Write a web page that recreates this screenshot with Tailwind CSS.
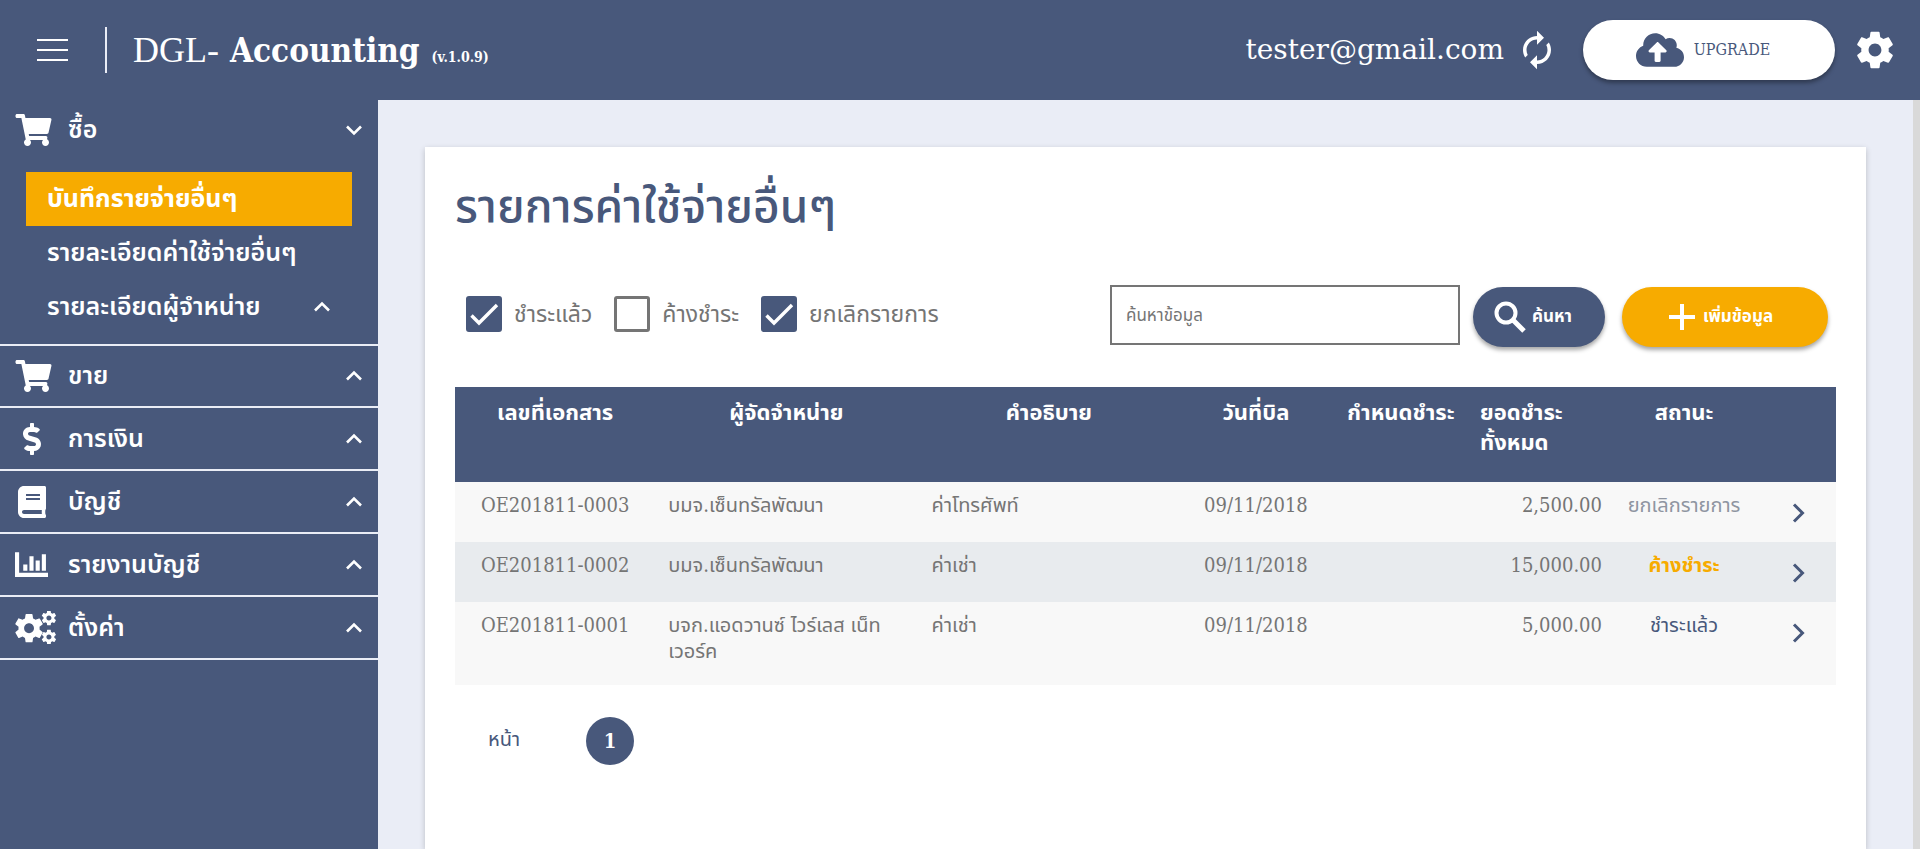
<!DOCTYPE html>
<html lang="th">
<head>
<meta charset="utf-8">
<meta name="viewport" content="width=device-width, initial-scale=1">
<title>DGL- Accounting</title>
<script src="https://cdn.jsdelivr.net/npm/@tailwindcss/browser@4"></script>
</head>
<body class="flex h-screen flex-col overflow-hidden bg-[#eaedf6] font-['DejaVu_Serif_Condensed','Noto_Sans_Thai','Noto_Sans',sans-serif] text-[20px] text-[#757575]">
<svg class="hidden" aria-hidden="true">
  <symbol id="cart" viewBox="0 0 576 512"><path d="M528.12 301.319l47.273-208C578.806 78.301 567.391 64 551.99 64H159.208l-9.166-44.81C147.758 8.021 137.93 0 126.529 0H24C10.745 0 0 10.745 0 24v16c0 13.255 10.745 24 24 24h69.883l70.248 343.435C147.325 417.1 136 435.222 136 456c0 30.928 25.072 56 56 56s56-25.072 56-56c0-15.674-6.447-29.835-16.824-40h209.647C430.447 426.165 424 440.326 424 456c0 30.928 25.072 56 56 56s56-25.072 56-56c0-22.172-12.888-41.332-31.579-50.405l5.517-24.276c3.413-15.018-8.002-29.319-23.403-29.319H218.117l-6.545-32h293.145c11.206 0 20.92-7.754 23.403-18.681z"/></symbol>
  <symbol id="dollar" viewBox="0 0 288 512"><path d="M209.2 233.4l-108-31.6C88.7 198.2 80 186.5 80 173.5c0-16.3 13.200-29.5 29.500-29.5h66.300c12.200 0 24.200 3.700 34.200 10.500 6.100 4.100 14.300 3.100 19.500-2l34.800-34c7.100-6.900 6.100-18.400-1.800-24.500C238 74.800 207.400 64.100 176 64V16c0-8.800-7.200-16-16-16h-32c-8.800 0-16 7.200-16 16v48h-2.500C45.800 64-5.400 118.700.5 183.600c4.200 46.100 39.400 83.600 83.800 96.600l102.500 30c12.500 3.700 21.200 15.300 21.200 28.300 0 16.300-13.200 29.500-29.500 29.500h-66.300C100 368 88 364.300 78 357.500c-6.100-4.100-14.300-3.100-19.500 2l-34.800 34c-7.100 6.900-6.100 18.400 1.800 24.500 24.500 19.200 55.100 29.900 86.500 30v48c0 8.800 7.200 16 16 16h32c8.800 0 16-7.200 16-16v-48.200c46.600-.9 90.300-28.600 105.700-72.700 21.500-61.600-14.600-124.800-72.500-141.700z"/></symbol>
  <symbol id="book" viewBox="0 0 448 512"><path fill-rule="evenodd" d="M448 360V24c0-13.300-10.700-24-24-24H96C43 0 0 43 0 96v320c0 53 43 96 96 96h328c13.300 0 24-10.700 24-24v-16c0-7.500-3.500-14.300-8.900-18.700-4.200-15.400-4.200-59.300 0-74.700 5.400-4.300 8.900-11.100 8.900-18.600zM134 128h212c3.300 0 6 2.700 6 6v20c0 3.300-2.700 6-6 6H134c-3.300 0-6-2.700-6-6v-20c0-3.300 2.700-6 6-6zm0 64h212c3.300 0 6 2.700 6 6v20c0 3.300-2.700 6-6 6H134c-3.300 0-6-2.700-6-6v-20c0-3.300 2.700-6 6-6zM381.400 448H96c-17.700 0-32-14.300-32-32 0-17.600 14.400-32 32-32h285.400c-1.900 17.100-1.900 46.900 0 64z"/></symbol>
  <symbol id="chart" viewBox="0 0 512 512"><path d="M64 64v320h448v64H0V64zM128 256h64v96h-64zM224 128h64v224h-64zM320 192h64v160h-64zM416 96h64v256h-64z"/></symbol>
  <symbol id="gear" viewBox="0 0 24 24"><path d="M19.430 12.980c.04-.32.07-.64.07-.98s-.03-.66-.07-.98l2.110-1.650c.19-.15.24-.42.12-.64l-2-3.460c-.12-.22-.39-.3-.61-.22l-2.490 1c-.52-.4-1.080-.73-1.690-.98l-.38-2.650C14.460 2.180 14.250 2 14 2h-4c-.25 0-.46.18-.49.42l-.38 2.650c-.61.25-1.170.59-1.690.98l-2.490-1c-.23-.09-.49 0-.61.22l-2 3.460c-.13.22-.07.49.12.64l2.110 1.650c-.04.32-.07.65-.07.98s.03.66.07.98l-2.110 1.650c-.19.15-.24.42-.12.64l2 3.460c.12.22.39.3.61.22l2.490-1c.52.4 1.080.73 1.690.98l.38 2.650c.03.24.24.42.49.42h4c.25 0 .46-.18.49-.42l.38-2.650c.61-.25 1.170-.59 1.690-.98l2.490 1c.23.09.49 0 .61-.22l2-3.460c.12-.22.07-.49-.12-.64l-2.110-1.650zM12 15.500c-1.930 0-3.500-1.570-3.500-3.500s1.570-3.500 3.500-3.500 3.500 1.570 3.500 3.500-1.570 3.500-3.500 3.500z"/></symbol>
  <symbol id="cogs" viewBox="0 0 40 32"><use href="#gear" x="-2.800" y="0.200" width="33" height="33"/><use href="#gear" x="24.600" y="-1.800" width="17" height="17"/><use href="#gear" x="24.600" y="16.800" width="17" height="17"/></symbol>
  <symbol id="up" viewBox="0 0 18 12"><path d="M2 9.500 9 2.500l7 7" fill="none" stroke="currentColor" stroke-width="2.600"/></symbol>
  <symbol id="next" viewBox="0 0 14 20"><path d="M2 1.500 10.500 10 2 18.500" fill="none" stroke="currentColor" stroke-width="3"/></symbol>
  <symbol id="tick" viewBox="0 0 36 36"><path d="M5.500 19.500 13 27 31 9" fill="none" stroke="currentColor" stroke-width="3.400"/></symbol>
</svg>

<header class="flex h-[100px] shrink-0 items-center bg-[#48587b] pr-[23px] pl-[37px] text-white">
  <button type="button" aria-label="เมนู" class="flex w-[31px] flex-col gap-[8px]">
    <span class="h-[2px] w-full bg-white"></span><span class="h-[2px] w-full bg-white"></span><span class="h-[2px] w-full bg-white"></span>
  </button>
  <span class="ml-[37px] h-[46px] w-[2px] bg-[#eaedf6]"></span>
  <div class="ml-[26px] flex items-baseline">
    <span class="font-['Liberation_Serif',serif] text-[36px]">DGL-</span>
    <span class="ml-[11px] text-[33px] font-bold">Accounting</span>
    <span class="ml-[12px] text-[14px] font-bold">(v.1.0.9)</span>
  </div>
  <span class="ml-auto font-['DejaVu_Serif',serif] text-[28px]">tester@gmail.com</span>
  <button type="button" aria-label="รีเฟรช" class="ml-[12px]"><svg class="h-[42px] w-[42px]" viewBox="0 0 24 24" fill="currentColor"><path d="M12 6v3l4-4-4-4v3c-4.420 0-8 3.580-8 8 0 1.570.46 3.030 1.240 4.260L6.700 14.800c-.45-.83-.7-1.790-.7-2.800 0-3.310 2.690-6 6-6zm6.760 1.740L17.300 9.200c.44.84.7 1.790.7 2.800 0 3.310-2.690 6-6 6v-3l-4 4 4 4v-3c4.420 0 8-3.580 8-8 0-1.570-.46-3.030-1.240-4.260z"/></svg></button>
  <button type="button" class="ml-[25px] flex h-[60px] w-[252px] items-center justify-center gap-[10px] rounded-full bg-white pr-[12px] text-[16px] text-[#48587b] shadow-[0_3px_4px_rgba(0,0,0,0.35)]">
    <svg class="h-[36px] w-[48px]" viewBox="0 0 640 480" fill="currentColor"><path d="M537.600 210.600c4.100-10.700 6.400-22.400 6.400-34.600 0-53-43-96-96-96-19.700 0-38.100 6-53.300 16.200C367 48.200 315.300 16 256 16c-88.400 0-160 71.600-160 160 0 2.700.1 5.400.2 8.100C40.200 203.800 0 257.200 0 320c0 79.500 64.500 144 144 144h368c70.700 0 128-57.300 128-128 0-61.900-44-113.600-102.400-125.400zM393.400 272H328v112c0 8.800-7.200 16-16 16h-48c-8.800 0-16-7.200-16-16V272h-65.400c-14.300 0-21.400-17.200-11.300-27.300l105.400-105.400c6.200-6.200 16.400-6.200 22.600 0l105.400 105.400c10.100 10.100 2.900 27.300-11.300 27.300z"/></svg>
    UPGRADE
  </button>
  <button type="button" aria-label="ตั้งค่า" class="ml-[18px]"><svg class="h-[46px] w-[44px]" fill="currentColor"><use href="#gear"/></svg></button>
</header>

<div class="flex min-h-0 flex-1">
  <nav class="w-[378px] shrink-0 bg-[#48587b] text-[25px] leading-[32px] font-semibold text-white" aria-label="เมนูหลัก">
    <section class="h-[246px] border-b-2 border-[#eaedf6]">
      <button type="button" class="flex h-[60px] w-full items-center px-[15px]" aria-expanded="true">
        <svg class="h-[32px] w-[37px]" fill="currentColor"><use href="#cart"/></svg><span class="ml-[16px]">ซื้อ</span>
        <svg class="ml-auto h-[12px] w-[18px] rotate-180"><use href="#up"/></svg>
      </button>
      <div class="mx-[26px] mt-[12px]">
        <a href="#" class="flex h-[54px] items-center bg-[#f7ab00] px-[21px] font-bold">บันทึกรายจ่ายอื่นๆ</a>
        <a href="#" class="flex h-[54px] items-center px-[21px]">รายละเอียดค่าใช้จ่ายอื่นๆ</a>
        <a href="#" class="flex h-[54px] items-center justify-between px-[21px]">รายละเอียดผู้จำหน่าย<svg class="h-[12px] w-[18px]"><use href="#up"/></svg></a>
      </div>
    </section>
    <button type="button" class="flex h-[62px] w-full items-center border-b-2 border-[#eaedf6] px-[15px]"><svg class="h-[32px] w-[37px]" fill="currentColor"><use href="#cart"/></svg><span class="ml-[16px]">ขาย</span><svg class="ml-auto h-[12px] w-[18px]"><use href="#up"/></svg></button>
    <button type="button" class="flex h-[63px] w-full items-center border-b-2 border-[#eaedf6] px-[15px]"><svg class="h-[32px] w-[34px]" fill="currentColor"><use href="#dollar"/></svg><span class="ml-[19px]">การเงิน</span><svg class="ml-auto h-[12px] w-[18px]"><use href="#up"/></svg></button>
    <button type="button" class="flex h-[63px] w-full items-center border-b-2 border-[#eaedf6] px-[15px]"><svg class="h-[32px] w-[34px]" fill="currentColor"><use href="#book"/></svg><span class="ml-[19px]">บัญชี</span><svg class="ml-auto h-[12px] w-[18px]"><use href="#up"/></svg></button>
    <button type="button" class="flex h-[63px] w-full items-center border-b-2 border-[#eaedf6] px-[15px]"><svg class="h-[33px] w-[33px]" fill="currentColor"><use href="#chart"/></svg><span class="ml-[20px]">รายงานบัญชี</span><svg class="ml-auto h-[12px] w-[18px]"><use href="#up"/></svg></button>
    <button type="button" class="flex h-[63px] w-full items-center border-b-2 border-[#eaedf6] px-[15px]"><svg class="h-[33px] w-[41px]" fill="currentColor"><use href="#cogs"/></svg><span class="ml-[12px]">ตั้งค่า</span><svg class="ml-auto h-[12px] w-[18px]"><use href="#up"/></svg></button>
  </nav>

  <main class="flex min-w-0 flex-1 border-r-[7px] border-[#d9d9d9] pt-[47px] pr-[47px] pl-[47px]">
    <div class="min-w-0 flex-1 bg-white px-[30px] shadow-[0_2px_6px_rgba(0,0,0,0.2)]">
      <h1 class="pt-[29px] text-[46px] leading-[60px] font-medium text-[#48587b]">รายการค่าใช้จ่ายอื่นๆ</h1>
      <div class="mt-[49px] flex items-start pr-[8px] pl-[11px]">
        <div class="flex items-center gap-[22px] pt-[11px] text-[23px] leading-[32px]">
          <label class="flex items-center gap-[12px]"><span class="grid"><input type="checkbox" checked class="peer col-start-1 row-start-1 h-[36px] w-[36px] appearance-none rounded-[3px] border-[3px] border-[#757575] checked:border-[#48587b] checked:bg-[#48587b]"><svg class="pointer-events-none col-start-1 row-start-1 hidden h-[36px] w-[36px] text-white peer-checked:block"><use href="#tick"/></svg></span>ชำระแล้ว</label>
          <label class="flex items-center gap-[12px]"><span class="grid"><input type="checkbox" class="peer col-start-1 row-start-1 h-[36px] w-[36px] appearance-none rounded-[3px] border-[3px] border-[#757575] checked:border-[#48587b] checked:bg-[#48587b]"><svg class="pointer-events-none col-start-1 row-start-1 hidden h-[36px] w-[36px] text-white peer-checked:block"><use href="#tick"/></svg></span>ค้างชำระ</label>
          <label class="flex items-center gap-[12px]"><span class="grid"><input type="checkbox" checked class="peer col-start-1 row-start-1 h-[36px] w-[36px] appearance-none rounded-[3px] border-[3px] border-[#757575] checked:border-[#48587b] checked:bg-[#48587b]"><svg class="pointer-events-none col-start-1 row-start-1 hidden h-[36px] w-[36px] text-white peer-checked:block"><use href="#tick"/></svg></span>ยกเลิกรายการ</label>
        </div>
        <input type="search" aria-label="ค้นหาข้อมูล" placeholder="ค้นหาข้อมูล" class="ml-auto h-[60px] w-[350px] border-2 border-[#757575] px-[14px] text-[17px] placeholder:text-[#757575]">
        <div class="ml-[13px] flex gap-[17px] pt-[2px] text-[17px] font-bold text-white">
          <button type="button" class="flex h-[60px] w-[132px] items-center justify-center gap-[6px] rounded-full bg-[#48587b] pr-[12px] shadow-[0_3px_4px_rgba(0,0,0,0.35)]"><svg class="h-[32px] w-[32px]" viewBox="0 0 32 32" fill="none" stroke="currentColor"><circle cx="12" cy="12" r="9.500" stroke-width="4"/><path d="m19 19 11 11" stroke-width="5"/></svg>ค้นหา</button>
          <button type="button" class="flex h-[60px] w-[206px] items-center justify-center gap-[8px] rounded-full bg-[#f7ab00] pr-[8px] shadow-[0_3px_4px_rgba(0,0,0,0.35)]"><svg class="h-[26px] w-[26px]" viewBox="0 0 26 26" stroke="currentColor" stroke-width="4"><path d="M13 0v26M0 13h26"/></svg>เพิ่มข้อมูล</button>
        </div>
      </div>
      <table class="mt-[40px] w-full table-fixed border-collapse leading-[26px]">
        <colgroup><col class="w-[14.5%]"><col class="w-[19%]"><col class="w-[19%]"><col class="w-[11%]"><col class="w-[10%]"><col class="w-[10.500%]"><col class="w-[10%]"><col></colgroup>
        <thead>
          <tr class="h-[95px] bg-[#48587b] align-top text-[22px] leading-[30px] font-bold text-white">
            <th class="pt-[10px]">เลขที่เอกสาร</th><th class="pt-[10px]">ผู้จัดจำหน่าย</th><th class="pt-[10px]">คำอธิบาย</th><th class="pt-[10px]">วันที่บิล</th><th class="pt-[10px] whitespace-nowrap">กำหนดชำระ</th><th class="pt-[10px] pl-[10px] text-left">ยอดชำระ<br>ทั้งหมด</th><th class="pt-[10px]">สถานะ</th><th class="pt-[10px]"></th>
          </tr>
        </thead>
        <tbody class="align-top">
          <tr class="h-[60px] bg-[#f8f8f8]"><td class="pt-[10px] text-center">OE201811-0003</td><td class="px-[13px] pt-[10px]">บมจ.เซ็นทรัลพัฒนา</td><td class="px-[14px] pt-[10px]">ค่าโทรศัพท์</td><td class="pt-[10px] text-center">09/11/2018</td><td></td><td class="pt-[10px] pr-[13px] text-right">2,500.00</td><td class="pt-[10px] text-center whitespace-nowrap text-[#8f95a1]">ยกเลิกรายการ</td><td class="pt-[21px] pl-[8px]"><button type="button" aria-label="เปิดรายการ" class="mx-auto block text-[#48587b]"><svg class="h-[20px] w-[14px]"><use href="#next"/></svg></button></td></tr>
          <tr class="h-[60px] bg-[#e8ebee]"><td class="pt-[10px] text-center">OE201811-0002</td><td class="px-[13px] pt-[10px]">บมจ.เซ็นทรัลพัฒนา</td><td class="px-[14px] pt-[10px]">ค่าเช่า</td><td class="pt-[10px] text-center">09/11/2018</td><td></td><td class="pt-[10px] pr-[13px] text-right">15,000.00</td><td class="pt-[10px] text-center font-bold whitespace-nowrap text-[#f7ab00]">ค้างชำระ</td><td class="pt-[21px] pl-[8px]"><button type="button" aria-label="เปิดรายการ" class="mx-auto block text-[#48587b]"><svg class="h-[20px] w-[14px]"><use href="#next"/></svg></button></td></tr>
          <tr class="h-[83px] bg-[#f8f8f8]"><td class="pt-[10px] text-center">OE201811-0001</td><td class="px-[13px] pt-[10px]">บจก.แอดวานซ์ ไวร์เลส เน็ท<br>เวอร์ค</td><td class="px-[14px] pt-[10px]">ค่าเช่า</td><td class="pt-[10px] text-center">09/11/2018</td><td></td><td class="pt-[10px] pr-[13px] text-right">5,000.00</td><td class="pt-[10px] text-center whitespace-nowrap text-[#48587b]">ชำระแล้ว</td><td class="pt-[21px] pl-[8px]"><button type="button" aria-label="เปิดรายการ" class="mx-auto block text-[#48587b]"><svg class="h-[20px] w-[14px]"><use href="#next"/></svg></button></td></tr>
        </tbody>
      </table>
      <div class="mt-[32px] flex items-start pl-[33px] text-[#48587b]">
        <span class="w-[98px] leading-[44px]">หน้า</span>
        <button type="button" aria-current="page" class="h-[48px] w-[48px] rounded-full bg-[#48587b] font-bold text-white">1</button>
      </div>
    </div>
  </main>
</div>
</body>
</html>
